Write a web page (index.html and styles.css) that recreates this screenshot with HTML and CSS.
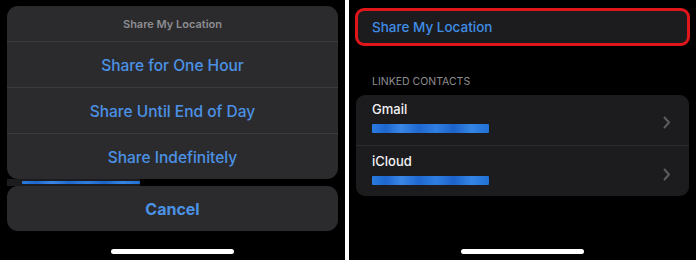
FILE: index.html
```html
<!DOCTYPE html>
<html>
<head>
<meta charset="utf-8">
<link rel="stylesheet" href="styles.css">
</head>
<body>
<div class="screen">
  <section class="pane left">
    <div class="sheet">
      <div class="sheet-title">Share My Location</div>
      <div class="sheet-item">Share for One Hour</div>
      <div class="sheet-item">Share Until End of Day</div>
      <div class="sheet-item">Share Indefinitely</div>
    </div>
    <div class="peek"><span class="blur-mail peek-mail"></span></div>
    <div class="cancel">Cancel</div>
    <div class="home-bar"></div>
  </section>
  <div class="split"></div>
  <section class="pane right">
    <div class="share-box">Share My Location</div>
    <div class="section-head">LINKED CONTACTS</div>
    <div class="group">
      <div class="row first">
        <div class="row-text">
          <div class="row-title">Gmail</div>
          <span class="blur-mail"></span>
        </div>
        <svg class="chev" width="8" height="13" viewBox="0 0 8 13"><path d="M1.5 1.5 L6 6.5 L1.5 11.5" fill="none" stroke="#5c5c60" stroke-width="2" stroke-linecap="round" stroke-linejoin="round"/></svg>
      </div>
      <div class="row second">
        <div class="row-text">
          <div class="row-title">iCloud</div>
          <span class="blur-mail"></span>
        </div>
        <svg class="chev" width="8" height="13" viewBox="0 0 8 13"><path d="M1.5 1.5 L6 6.5 L1.5 11.5" fill="none" stroke="#5c5c60" stroke-width="2" stroke-linecap="round" stroke-linejoin="round"/></svg>
      </div>
    </div>
    <div class="home-bar"></div>
  </section>
</div>
</body>
</html>
```

FILE: styles.css
```css
* { box-sizing: border-box; }
html, body { margin: 0; padding: 0; background: #000; }
body {
  font-family: Inter, "Noto Sans", "Liberation Sans", sans-serif;
  width: 696px;
  height: 260px;
  overflow: hidden;
}
.screen {
  display: flex;
  width: 696px;
  height: 260px;
}
.pane {
  display: flex;
  flex-direction: column;
  background: #000;
  height: 260px;
  position: relative;
}
.left {
  width: 345px;
  padding: 6px 7px 0 7px;
}
.split {
  width: 4px;
  background: #fff;
}
.right {
  width: 347px;
  padding: 8px 6px 0 6px;
}
.sheet {
  background: #2b2b2d;
  border-radius: 11px;
  overflow: hidden;
}
.sheet-title {
  height: 36px;
  display: flex;
  align-items: center;
  justify-content: center;
  color: #8d8d92;
  font-size: 11px;
  font-weight: 600;
  border-bottom: 1px solid #3b3b3e;
}
.sheet-item {
  height: 46px;
  display: flex;
  align-items: center;
  justify-content: center;
  color: #4b92e6;
  font-size: 15.5px;
  font-weight: 500;
  padding-top: 1px;
  border-bottom: 1px solid #3b3b3e;
}
.sheet-item:last-child { border-bottom: none; height: 45px; }
.peek {
  height: 7px;
  width: 133px;
  background: #1c1c1e;
  display: flex;
  align-items: center;
  padding-left: 15px;
}
.blur-mail {
  display: block;
  width: 117px;
  height: 9px;
  border-radius: 1px;
  background: linear-gradient(90deg, #2b7be0 0%, #1d67cf 12%, #3a86e6 25%, #1e68d0 40%, #2f7ee2 55%, #1c63cb 70%, #3485e4 85%, #2070d6 100%);
  filter: blur(0.6px);
}
.peek-mail { width: 118px; height: 3px; }
.cancel {
  height: 45px;
  background: #2b2b2d;
  border-radius: 11px;
  display: flex;
  align-items: center;
  justify-content: center;
  color: #4b92e6;
  font-size: 16px;
  font-weight: 700;
}
.home-bar {
  position: absolute;
  left: 111px;
  top: 249px;
  width: 123px;
  height: 5px;
  border-radius: 3px;
  background: #fff;
}
.right .home-bar { left: 112px; }
.share-box {
  height: 38px;
  border: 3px solid #e0161b;
  border-radius: 9px;
  background: #1c1c1e;
  color: #3f8de6;
  font-size: 13.5px;
  font-weight: 500;
  display: flex;
  align-items: center;
  padding-left: 14px;
}
.section-head {
  margin-top: 29px;
  padding-left: 17px;
  color: #8d8d92;
  font-size: 10.5px;
  height: 14px;
  line-height: 14px;
}
.group {
  margin-top: 6px;
  margin-left: 1px;
  margin-right: 1px;
  background: #1c1c1e;
  border-radius: 9px;
  overflow: hidden;
}
.row {
  display: flex;
  align-items: flex-start;
  padding: 0 18px 0 16px;
}
.row.first { height: 50px; padding-top: 7px; }
.row.second { height: 51px; padding-top: 8px; border-top: 1px solid #2c2c2e; }
.row-text {
  flex: 1;
  display: flex;
  flex-direction: column;
  gap: 8px;
}
.row-title {
  color: #f2f2f5;
  font-size: 13px;
  font-weight: 500;
  line-height: 14px;
}
.chev { flex: none; align-self: center; margin-bottom: 2px; }
```
